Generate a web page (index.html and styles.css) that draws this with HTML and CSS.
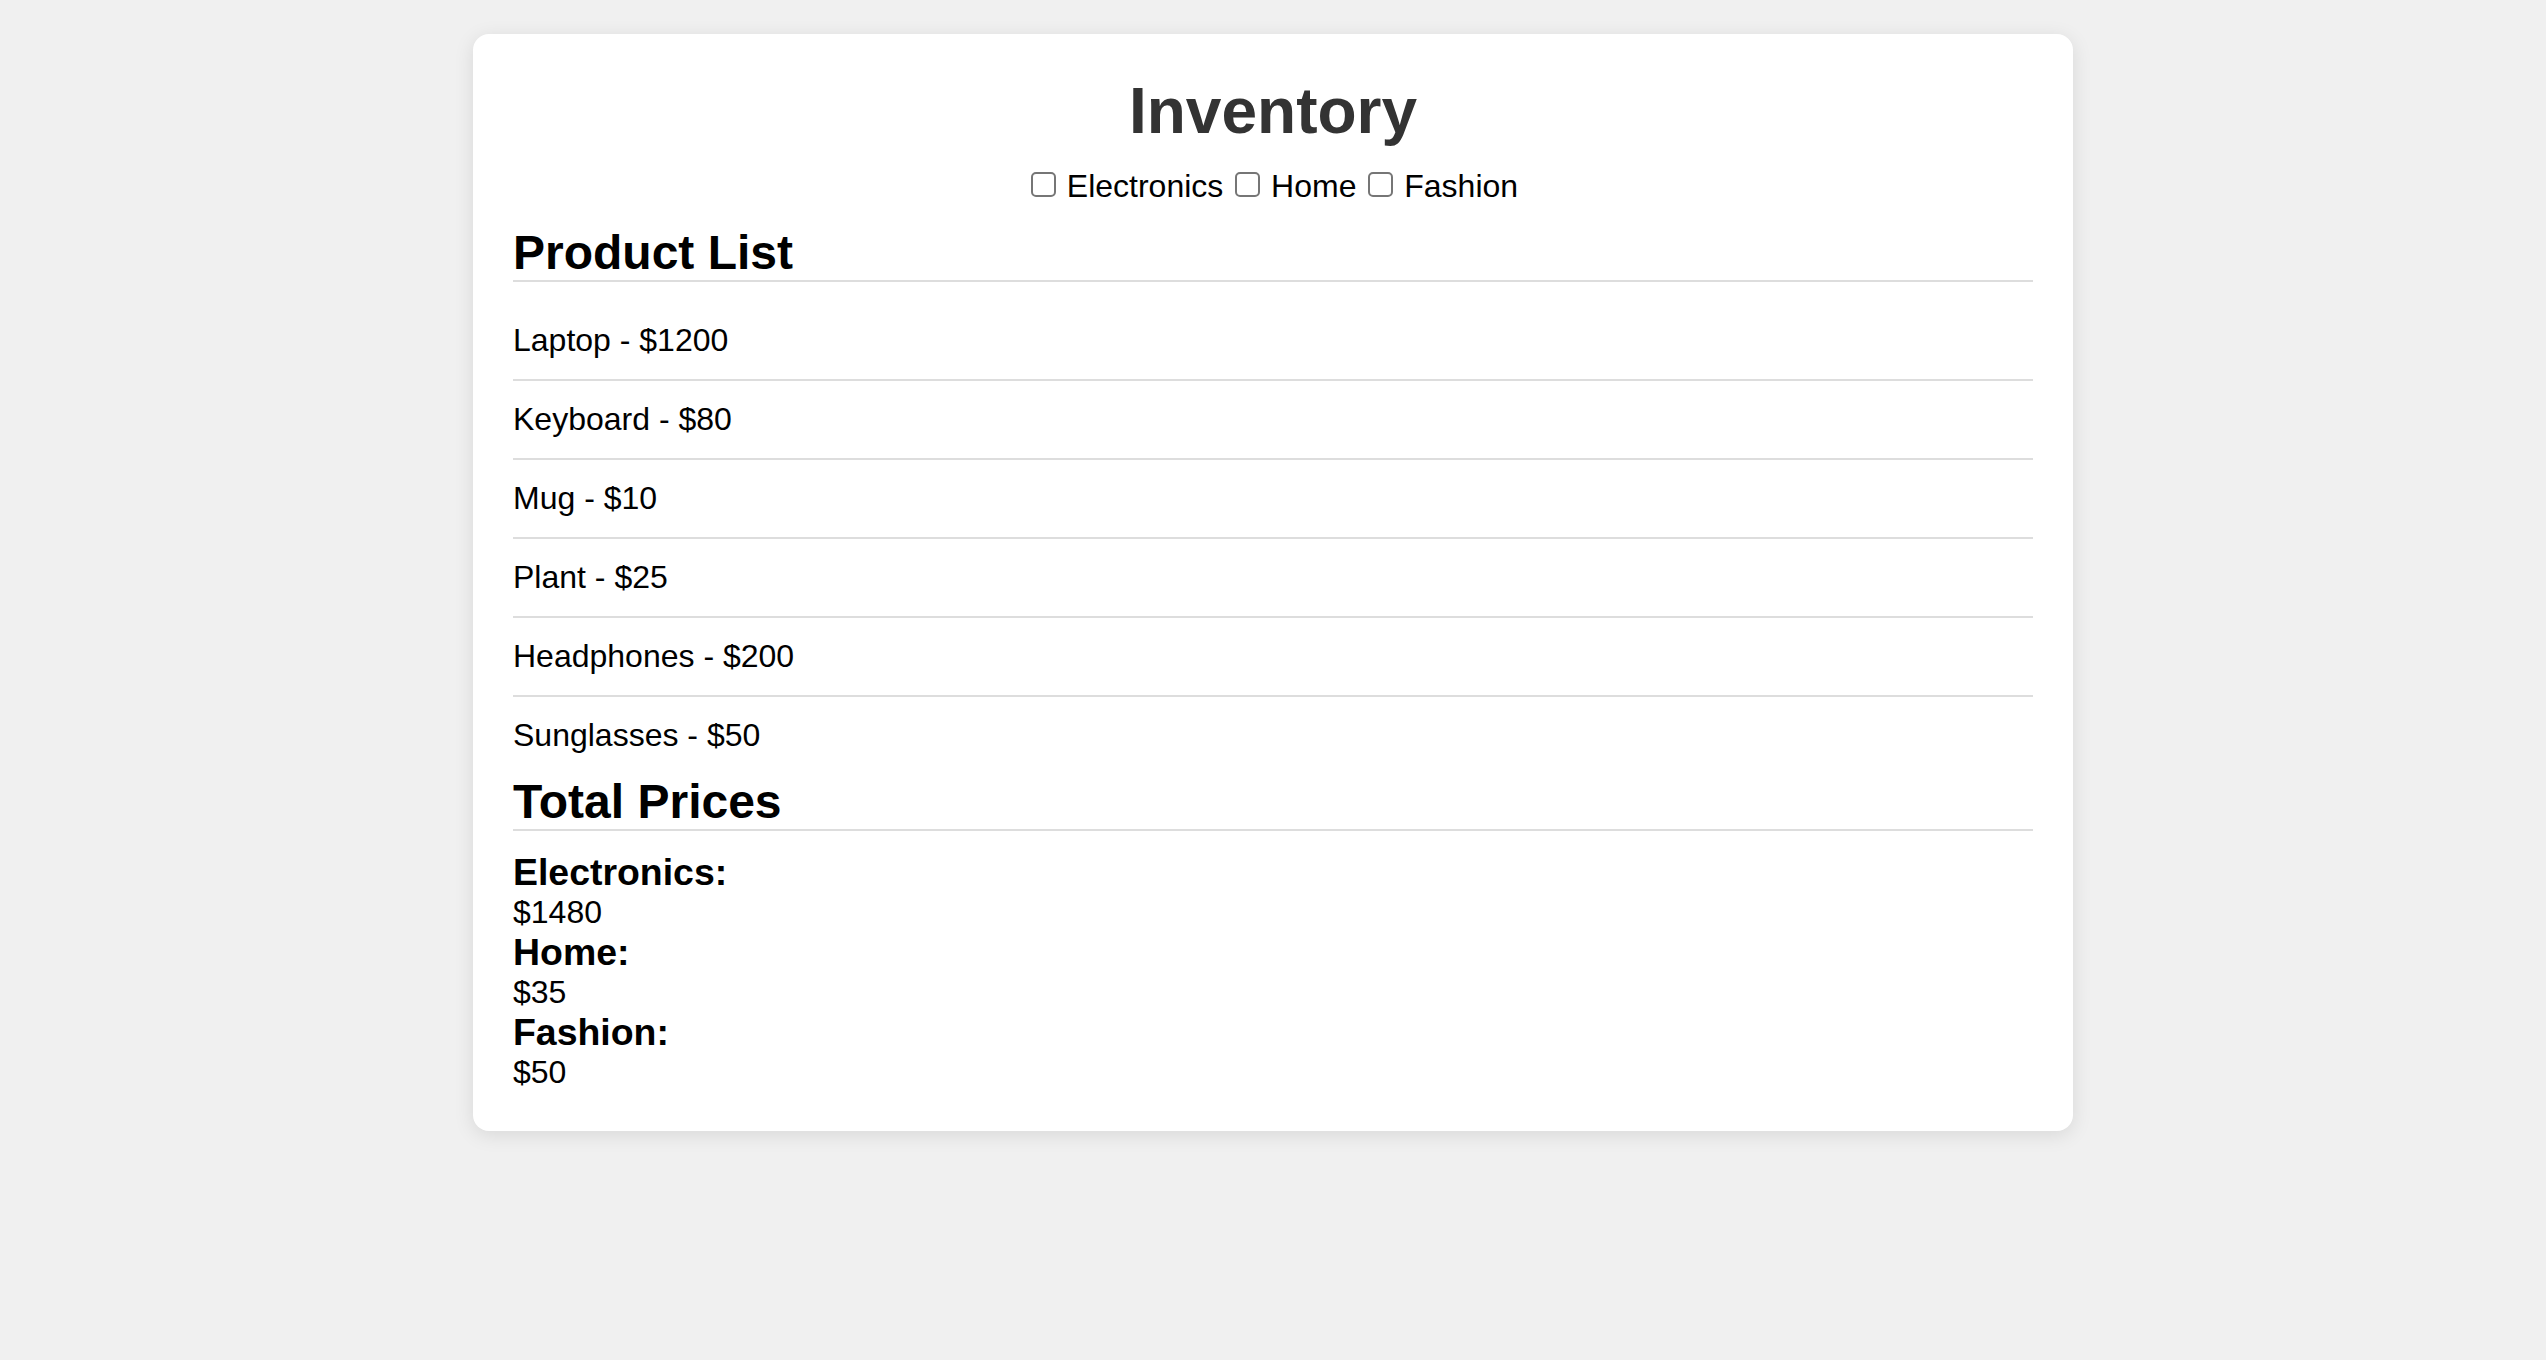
FILE: index.html
```html
<!DOCTYPE html>
<html lang="en">
<head>
<meta charset="utf-8">
<title>Inventory</title>
<link rel="stylesheet" href="styles.css">
</head>
<body>
<div class="card">
  <h1 class="title">Inventory</h1>
  <div class="filters">
    <label class="filter"><input type="checkbox" class="check"> Electronics</label>
    <label class="filter"><input type="checkbox" class="check"> Home</label>
    <label class="filter"><input type="checkbox" class="check"> Fashion</label>
  </div>
  <h2 class="section-title">Product List</h2>
  <ul class="products">
    <li class="product">Laptop - $1200</li>
    <li class="product">Keyboard - $80</li>
    <li class="product">Mug - $10</li>
    <li class="product">Plant - $25</li>
    <li class="product">Headphones - $200</li>
    <li class="product">Sunglasses - $50</li>
  </ul>
  <h2 class="section-title">Total Prices</h2>
  <div class="totals">
    <h3 class="total-label">Electronics:</h3>
    <p class="total-value">$1480</p>
    <h3 class="total-label">Home:</h3>
    <p class="total-value">$35</p>
    <h3 class="total-label">Fashion:</h3>
    <p class="total-value">$50</p>
  </div>
</div>
</body>
</html>
```

FILE: styles.css
```css
html, body {
  margin: 0;
  padding: 0;
}

body {
  background: #f0f0f0;
  font-family: "Liberation Sans", Arial, Helvetica, sans-serif;
  font-size: 32px;
  color: #000;
}

.card {
  width: 1600px;
  box-sizing: border-box;
  margin: 34px auto;
  padding: 40px;
  background: #fff;
  border-radius: 16px;
  box-shadow: 0 4px 20px rgba(0, 0, 0, 0.1);
}

.title {
  margin: 0 0 20px;
  text-align: center;
  font-size: 64px;
  font-weight: bold;
  color: #333;
}

.filters {
  text-align: center;
  margin-bottom: 20px;
}

.check {
  -webkit-appearance: none;
  appearance: none;
  box-sizing: border-box;
  width: 25px;
  height: 25px;
  margin: 0 2px 0 3px;
  border: 2px solid #767676;
  border-radius: 5px;
  background: #fff;
  vertical-align: baseline;
}

.section-title {
  margin: 0 0 20px;
  font-size: 48px;
  font-weight: bold;
  border-bottom: 2px solid #ddd;
}

.products {
  list-style: none;
  margin: 0;
  padding: 0;
}

.product {
  padding: 20px 0;
  border-bottom: 2px solid #ddd;
}

.product:last-child {
  border-bottom: none;
}

.totals {
  margin: 0;
}

.total-label {
  margin: 0;
  font-size: 37.44px;
  font-weight: bold;
}

.total-value {
  margin: 0;
}
```
